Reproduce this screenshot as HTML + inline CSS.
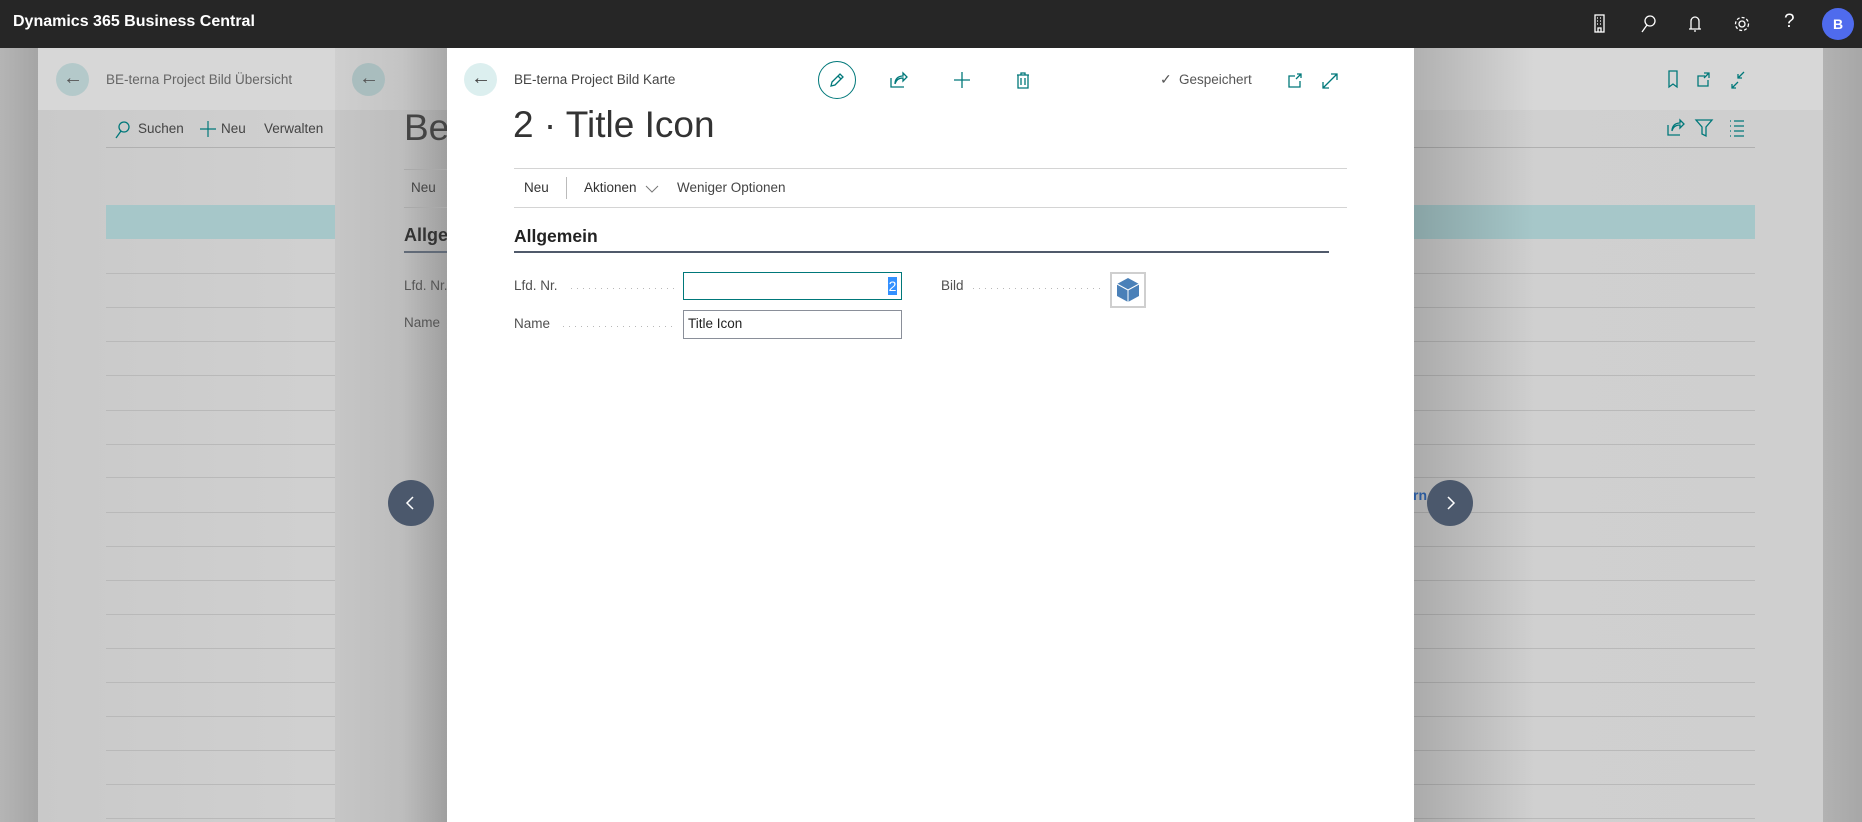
<!DOCTYPE html>
<html><head><meta charset="utf-8"><style>
*{margin:0;padding:0;box-sizing:border-box}
body{width:1862px;height:822px;overflow:hidden;font-family:"Segoe UI","Liberation Sans",sans-serif;background:#a9a9a9;position:relative}
.a{position:absolute}
.t{position:absolute;white-space:nowrap}
.top{left:0;top:0;width:1862px;height:48px;background:#262626}
.row{position:absolute;left:106px;width:1649px;height:1px;background:#b9b9b9}
.dots{position:absolute;height:1px;background:repeating-linear-gradient(90deg,#b8b8b8 0 1px,transparent 1px 6px)}
</style></head><body>
<div class="a top"></div>
<div class="t" style="left:13px;top:13px;color:#fff;font-weight:bold;font-size:16px">Dynamics 365 Business Central</div>
<svg class="a" style="left:1590px;top:12px" width="200" height="24" fill="none" stroke="#fff" stroke-width="1.3">
<rect x="5" y="3" width="9" height="17"/><path d="M7 6h1M10 6h1M7 9h1M10 9h1M7 12h1M10 12h1M8 20v-4h3v4"/>
<circle cx="60" cy="9" r="5"/><path d="M57 13l-5 7"/>
<path d="M101 17v-8a4 4 0 0 1 8 0v8zM99 17h12M104 19h2"/>
<circle cx="152" cy="12" r="3"/><circle cx="152" cy="12" r="6.5" stroke-dasharray="3 2"/>
</svg>
<div class="t" style="left:1784px;top:11px;color:#fff;font-size:19px">?</div>
<div class="a" style="left:1822px;top:8px;width:32px;height:32px;border-radius:50%;background:#4f6bed;color:#fff;font-weight:bold;font-size:14px;text-align:center;line-height:32px">B</div>

<!-- page 1 -->
<div class="a" style="left:38px;top:48px;width:1785px;height:774px;background:linear-gradient(90deg,#c9c9c9,#d2d2d2 20%,#cfcfcf)"></div>
<div class="a" style="left:38px;top:48px;width:1785px;height:62px;background:#d7d7d7"></div>
<div class="a" style="left:56px;top:63px;width:33px;height:33px;border-radius:50%;background:#b4c9ca"></div>
<div class="t" style="left:63px;top:67px;color:#555;font-size:20px">←</div>
<div class="t" style="left:106px;top:72px;color:#666;font-size:13.5px">BE-terna Project Bild Übersicht</div>
<svg class="a" style="left:112px;top:120px" width="20" height="20"><circle cx="12" cy="7" r="5" stroke="#00787a" fill="none" stroke-width="1.3"/><path d="M9 11l-5 7" stroke="#00787a" stroke-width="1.3"/></svg>
<div class="t" style="left:138px;top:121px;color:#444;font-size:13.5px">Suchen</div>
<svg class="a" style="left:199px;top:120px" width="18" height="18" stroke="#00787a" stroke-width="1.2"><path d="M9 1v16M1 9h16"/></svg>
<div class="t" style="left:221px;top:121px;color:#444;font-size:13.5px">Neu</div>
<div class="t" style="left:264px;top:121px;color:#444;font-size:13.5px">Verwalten</div>
<div class="row" style="top:147px;background:#b0b0b0"></div>
<div class="a" style="left:106px;top:205px;width:1649px;height:34px;background:#a6c7c9"></div>
<div class="row" style="top:273px"></div><div class="row" style="top:307px"></div><div class="row" style="top:341px"></div><div class="row" style="top:375px"></div><div class="row" style="top:410px"></div><div class="row" style="top:444px"></div><div class="row" style="top:477px"></div><div class="row" style="top:512px"></div><div class="row" style="top:546px"></div><div class="row" style="top:580px"></div><div class="row" style="top:614px"></div><div class="row" style="top:648px"></div><div class="row" style="top:682px"></div><div class="row" style="top:716px"></div><div class="row" style="top:750px"></div><div class="row" style="top:784px"></div><div class="row" style="top:818px"></div>
<svg class="a" style="left:1664px;top:68px" width="90" height="24" fill="none" stroke="#00787a" stroke-width="1.3">
<path d="M5 3h8v16l-4-3-4 3z"/><path d="M41 8h-7v10h10v-6M40 5h5v5M45 5l-5 5"/><path d="M80 4l-6 6M74 6v4h4M68 20l6-6M68 16v4h4"/>
</svg>
<svg class="a" style="left:1664px;top:116px" width="90" height="24" fill="none" stroke="#00787a" stroke-width="1.3">
<path d="M4 9v10h12M8 15c0-5 3-8 8-8V4l4 4-4 4V9c-4 0-7 2-8 6"/><path d="M32 4h16l-6 7v9l-4-2v-7z"/><path d="M66 5h1M66 10h1M66 15h1M66 20h1M70 5h10M70 10h10M70 15h10M70 20h10"/>
</svg>

<!-- page 2 -->
<div class="a" style="left:335px;top:48px;width:112px;height:774px;background:linear-gradient(90deg,#c6c6c6,#bdbdbd 60%,#9f9f9f)"></div>
<div class="a" style="left:335px;top:48px;width:112px;height:62px;background:linear-gradient(90deg,#cfcfcf,#c4c4c4 60%,#a9a9a9)"></div>
<div class="a" style="left:352px;top:63px;width:33px;height:33px;border-radius:50%;background:#a9bdbe"></div>
<div class="t" style="left:359px;top:67px;color:#555;font-size:20px">←</div>
<div class="a" style="left:404px;top:48px;width:43px;height:300px;overflow:hidden">
<div class="t" style="left:0;top:59px;color:#444;font-size:37px">Be</div>
<div class="a" style="left:0;top:121px;width:60px;height:1px;background:#aaa"></div>
<div class="t" style="left:7px;top:132px;color:#444;font-size:13.5px">Neu</div>
<div class="a" style="left:0;top:159px;width:60px;height:1px;background:#aaa"></div>
<div class="t" style="left:0;top:177px;color:#333;font-size:18px;font-weight:bold">Allgemein</div>
<div class="a" style="left:0;top:203px;width:60px;height:2px;background:#616a77"></div>
<div class="t" style="left:0;top:230px;color:#555;font-size:13.5px">Lfd. Nr.</div>
<div class="t" style="left:0;top:267px;color:#555;font-size:13.5px">Name</div>
</div>
<div class="a" style="left:1414px;top:48px;width:120px;height:774px;background:linear-gradient(90deg,rgba(0,0,0,.18),rgba(0,0,0,0))"></div>
<div class="a" style="left:1823px;top:48px;width:39px;height:774px;background:linear-gradient(90deg,#b2b2b2,#a7a7a7)"></div>
<div class="a" style="left:0;top:48px;width:38px;height:774px;background:linear-gradient(90deg,#b5b5b5,#a5a5a5)"></div>

<!-- card -->
<div class="a" style="left:447px;top:48px;width:967px;height:774px;background:#fff"></div>
<div class="a" style="left:464px;top:63px;width:33px;height:33px;border-radius:50%;background:#dcefef"></div>
<div class="t" style="left:471px;top:67px;color:#444;font-size:20px">←</div>
<div class="t" style="left:514px;top:72px;color:#444;font-size:13.5px">BE-terna Project Bild Karte</div>
<div class="a" style="left:818px;top:61px;width:38px;height:38px;border-radius:50%;border:1.3px solid #00787a"></div>
<svg class="a" style="left:827px;top:70px" width="20" height="20" fill="none" stroke="#00787a" stroke-width="1.3"><path d="M4 16l1-4 8-8 3 3-8 8zM11 6l3 3"/></svg>
<svg class="a" style="left:889px;top:70px" width="150" height="20" fill="none" stroke="#00787a" stroke-width="1.3">
<path d="M2 8v9h13M6 14c0-5 3-8 8-8V3l4 4-4 4V8c-4 0-7 2-8 6"/>
<path d="M73 2v16M65 10h16"/>
<path d="M128 5h12M132 5V3h4v2M129 5v13h10V5M132 8v7M136 8v7"/>
</svg>
<div class="t" style="left:1160px;top:71px;color:#555;font-size:14px">✓</div>
<div class="t" style="left:1179px;top:72px;color:#555;font-size:13.5px">Gespeichert</div>
<svg class="a" style="left:1287px;top:70px" width="60" height="20" fill="none" stroke="#00787a" stroke-width="1.3">
<path d="M8 6H2v11h11v-6M10 4h4v4M14 4l-5 5"/><path d="M36 18l14-14M36 12v6h6M50 10V4h-6"/>
</svg>
<div class="t" style="left:513px;top:104px;color:#333;font-size:37px">2 · Title Icon</div>
<div class="a" style="left:514px;top:168px;width:833px;height:1px;background:#d4d4d4"></div>
<div class="t" style="left:524px;top:180px;color:#333;font-size:13.5px">Neu</div>
<div class="a" style="left:566px;top:177px;width:1px;height:22px;background:#bbb"></div>
<div class="t" style="left:584px;top:180px;color:#333;font-size:13.5px">Aktionen</div>
<svg class="a" style="left:645px;top:184px" width="14" height="10" fill="none" stroke="#777" stroke-width="1"><path d="M1 2l6 6 6-6"/></svg>
<div class="t" style="left:677px;top:180px;color:#444;font-size:13.5px">Weniger Optionen</div>
<div class="a" style="left:514px;top:207px;width:833px;height:1px;background:#d4d4d4"></div>
<div class="t" style="left:514px;top:226px;color:#222;font-size:17.5px;font-weight:bold">Allgemein</div>
<div class="a" style="left:514px;top:251px;width:815px;height:2px;background:#505a6b"></div>

<div class="t" style="left:514px;top:278px;color:#505050;font-size:13.5px">Lfd. Nr.</div>
<div class="dots" style="left:571px;top:288px;width:106px"></div>
<div class="a" style="left:683px;top:272px;width:219px;height:28px;border:1.3px solid #00787a"></div>
<div class="a" style="left:888px;top:277px;width:9px;height:18px;background:#3390ff;color:#fff;font-size:14px;line-height:18px;text-align:center">2</div>
<div class="t" style="left:514px;top:316px;color:#505050;font-size:13.5px">Name</div>
<div class="dots" style="left:563px;top:326px;width:114px"></div>
<div class="a" style="left:683px;top:310px;width:219px;height:29px;border:1px solid #8a8f99"></div>
<div class="t" style="left:688px;top:316px;color:#222;font-size:13.5px">Title Icon</div>

<div class="t" style="left:941px;top:278px;color:#505050;font-size:13.5px">Bild</div>
<div class="dots" style="left:973px;top:288px;width:131px"></div>
<div class="a" style="left:1110px;top:272px;width:36px;height:36px;border:2px solid #cfcfcf"></div>
<svg class="a" style="left:1114px;top:276px" width="28" height="28"><path d="M14 2l11 6v12l-11 6-11-6V8z" fill="#4a80b8"/><path d="M3 8l11 6 11-6M14 14v12" stroke="#fff" stroke-width="1" fill="none"/></svg>

<div class="a" style="left:388px;top:480px;width:46px;height:46px;border-radius:50%;background:#4b586c"></div>
<svg class="a" style="left:402px;top:494px" width="18" height="18" fill="none" stroke="#fff" stroke-width="1.5"><path d="M11 3l-6 6 6 6"/></svg>
<div class="t" style="left:1413px;top:487px;color:#2b5a9c;font-size:14px;font-weight:bold">rn</div>
<div class="a" style="left:1427px;top:480px;width:46px;height:46px;border-radius:50%;background:#4b586c"></div>
<svg class="a" style="left:1441px;top:494px" width="18" height="18" fill="none" stroke="#fff" stroke-width="1.5"><path d="M7 3l6 6-6 6"/></svg>
</body></html>
